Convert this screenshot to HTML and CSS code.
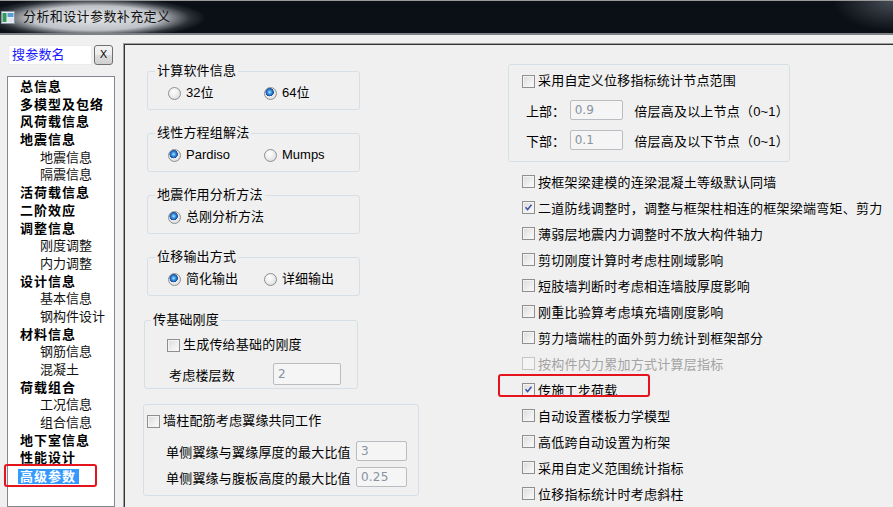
FILE: index.html
```html
<!DOCTYPE html>
<html lang="zh-CN">
<head>
<meta charset="utf-8">
<title>分析和设计参数补充定义</title>
<link rel="stylesheet" href="styles.css">
</head>
<body>
<div class="window">
  <header class="titlebar">
    <span class="app-icon">
      <svg width="14" height="13" viewBox="0 0 14 13">
        <rect x="0.5" y="0.5" width="13" height="12" fill="#e9eef2" stroke="#8a96a0"/>
        <rect x="1.5" y="2" width="4" height="9" fill="#2f9a5c"/>
        <rect x="6.5" y="2" width="6" height="4" fill="#5b9bd5"/>
        <rect x="6.5" y="7" width="6" height="4" fill="#d9e4ec"/>
      </svg>
    </span>
    <span class="title">分析和设计参数补充定义</span>
  </header>
  <div class="content">
    <aside class="side">
      <div class="search">
        <div class="search-box">搜参数名</div>
        <div class="xbtn">X</div>
      </div>
      <ul class="tree">
        <li class="top">总信息</li>
        <li class="top">多模型及包络</li>
        <li class="top">风荷载信息</li>
        <li class="top">地震信息</li>
        <li class="sub">地震信息</li>
        <li class="sub">隔震信息</li>
        <li class="top">活荷载信息</li>
        <li class="top">二阶效应</li>
        <li class="top">调整信息</li>
        <li class="sub">刚度调整</li>
        <li class="sub">内力调整</li>
        <li class="top">设计信息</li>
        <li class="sub">基本信息</li>
        <li class="sub">钢构件设计</li>
        <li class="top">材料信息</li>
        <li class="sub">钢筋信息</li>
        <li class="sub">混凝土</li>
        <li class="top">荷载组合</li>
        <li class="sub">工况信息</li>
        <li class="sub">组合信息</li>
        <li class="top">地下室信息</li>
        <li class="top">性能设计</li>
        <li class="top marked"><span class="sel">高级参数</span></li>
      </ul>
    </aside>
    <main class="panel">
      <section class="col-mid">
        <fieldset class="grp">
          <legend>计算软件信息</legend>
          <div class="opts">
            <span class="radio"><i></i>32位</span>
            <span class="radio on"><i></i>64位</span>
          </div>
        </fieldset>
        <fieldset class="grp">
          <legend>线性方程组解法</legend>
          <div class="opts">
            <span class="radio on"><i></i>Pardiso</span>
            <span class="radio"><i></i>Mumps</span>
          </div>
        </fieldset>
        <fieldset class="grp">
          <legend>地震作用分析方法</legend>
          <div class="opts">
            <span class="radio on"><i></i>总刚分析方法</span>
          </div>
        </fieldset>
        <fieldset class="grp">
          <legend>位移输出方式</legend>
          <div class="opts">
            <span class="radio on"><i></i>简化输出</span>
            <span class="radio"><i></i>详细输出</span>
          </div>
        </fieldset>
        <fieldset class="grp grp-base">
          <legend>传基础刚度</legend>
          <div class="chk-row"><span class="chk"></span>生成传给基础的刚度</div>
          <div class="field-row">
            <span class="flabel">考虑楼层数</span>
            <span class="field f-floors">2</span>
          </div>
        </fieldset>
        <div class="box box-wall">
          <div class="chk-row"><span class="chk"></span>墙柱配筋考虑翼缘共同工作</div>
          <div class="ratio-row r1">
            <span>单侧翼缘与翼缘厚度的最大比值</span>
            <span class="field">3</span>
          </div>
          <div class="ratio-row r2">
            <span>单侧翼缘与腹板高度的最大比值</span>
            <span class="field">0.25</span>
          </div>
        </div>
      </section>
      <section class="col-right">
        <div class="box box-range">
          <div class="chk-row"><span class="chk"></span>采用自定义位移指标统计节点范围</div>
          <div class="range-row rr1">
            <span class="rlabel">上部：</span>
            <span class="field f-range">0.9</span>
            <span class="rtext">倍层高及以上节点（0~1）</span>
          </div>
          <div class="range-row rr2">
            <span class="rlabel">下部：</span>
            <span class="field f-range">0.1</span>
            <span class="rtext">倍层高及以下节点（0~1）</span>
          </div>
        </div>
        <ul class="checks">
          <li><span class="chk"></span>按框架梁建模的连梁混凝土等级默认同墙</li>
          <li><span class="chk on"><svg viewBox="0 0 13 13"><path d="M3 6.3 L5.4 9 L10 3.2" /></svg></span>二道防线调整时，调整与框架柱相连的框架梁端弯矩、剪力</li>
          <li><span class="chk"></span>薄弱层地震内力调整时不放大构件轴力</li>
          <li><span class="chk"></span>剪切刚度计算时考虑柱刚域影响</li>
          <li><span class="chk"></span>短肢墙判断时考虑相连墙肢厚度影响</li>
          <li><span class="chk"></span>刚重比验算考虑填充墙刚度影响</li>
          <li><span class="chk"></span>剪力墙端柱的面外剪力统计到框架部分</li>
          <li class="disabled"><span class="chk"></span>按构件内力累加方式计算层指标</li>
          <li class="marked"><span class="chk on"><svg viewBox="0 0 13 13"><path d="M3 6.3 L5.4 9 L10 3.2" /></svg></span>传施工步荷载</li>
          <li><span class="chk"></span>自动设置楼板力学模型</li>
          <li><span class="chk"></span>高低跨自动设置为桁架</li>
          <li><span class="chk"></span>采用自定义范围统计指标</li>
          <li><span class="chk"></span>位移指标统计时考虑斜柱</li>
        </ul>
      </section>
    </main>
  </div>
</div>
</body>
</html>
```

FILE: styles.css
```css
html, body {
  margin: 0;
  padding: 0;
}
body {
  width: 893px;
  height: 507px;
  overflow: hidden;
  background: #f0f0f0;
  font-family: "Liberation Sans", "Noto Sans CJK SC", sans-serif;
  font-size: 13px;
  color: #000;
}
.window {
  width: 893px;
  height: 507px;
  display: flex;
  flex-direction: column;
}

/* ---------- title bar ---------- */
.titlebar {
  height: 32px;
  flex: none;
  display: flex;
  align-items: center;
  border-top: 1px solid #9a9a9a;
  border-bottom: 2px solid #7d8186;
  background:
    radial-gradient(ellipse 112px 21px at 94px 17px, rgba(236,238,240,0.97) 0%, rgba(216,220,224,0.88) 58%, rgba(120,126,132,0.3) 86%, rgba(11,15,22,0) 100%),
    radial-gradient(ellipse 60px 30px at 893px 0px, rgba(120,128,136,0.55), rgba(11,15,22,0) 100%),
    #0b0f16;
}
.app-icon {
  width: 14px;
  height: 13px;
  margin-left: 1px;
  display: flex;
}
.title {
  margin-left: 8px;
  font-size: 13px;
  letter-spacing: 0.4px;
  color: #111;
  line-height: 16px;
}

/* ---------- content ---------- */
.content {
  flex: 1;
  display: flex;
  padding-top: 8px;
  background: #f0f0f0;
  min-height: 0;
}
.side {
  width: 123px;
  flex: none;
  display: flex;
  flex-direction: column;
}
.search {
  display: flex;
  align-items: center;
  margin-top: 2px;
  padding-left: 8px;
  gap: 2px;
}
.search-box {
  width: 84px;
  height: 20px;
  box-sizing: border-box;
  background: #fff;
  border: 1px solid #ececec;
  color: #1a1aff;
  font-size: 13px;
  line-height: 18px;
  padding-left: 3px;
  letter-spacing: 0.2px;
}
.xbtn {
  width: 19px;
  height: 20px;
  box-sizing: border-box;
  border: 1px solid #707070;
  border-radius: 3px;
  background: linear-gradient(#f4f4f4, #ebebeb 48%, #dcdcdc 52%, #cfcfcf);
  font-family: "DejaVu Sans", sans-serif;
  font-size: 11px;
  line-height: 18px;
  text-align: center;
  color: #111;
}
.tree {
  list-style: none;
  margin: 11px 0 0 7px;
  padding: 1px 0 0;
  width: 108px;
  height: 440px;
  box-sizing: border-box;
  background: #fff;
  border: 1px solid #828790;
}
.tree li {
  line-height: 17.7px;
  height: 17.7px;
  white-space: nowrap;
  font-size: 13px;
}
.tree .top {
  padding-left: 12px;
  font-weight: bold;
  letter-spacing: 1px;
}
.tree .sub {
  padding-left: 32px;
  color: #111;
}
.tree .sel {
  display: inline-block;
  background: #3399ff;
  color: #fff;
  line-height: 15px;
  padding: 0 3px 0 2px;
  margin-left: -2px;
  vertical-align: middle;
}
.tree .marked {
  position: relative;
}
.tree .marked::after {
  content: "";
  position: absolute;
  left: -4px;
  top: -3px;
  width: 93px;
  height: 23px;
  box-sizing: border-box;
  border: 2px solid #e5141c;
  border-radius: 3px;
}

/* ---------- panel ---------- */
.panel {
  flex: 1;
  display: flex;
  border-top: 1px solid #a0a0a0;
  border-left: 1px solid #a0a0a0;
  box-shadow: inset 1px 1px 0 #333;
  padding: 1px 0 0 1px;
  min-width: 0;
}
.col-mid {
  width: 383px;
  flex: none;
  box-sizing: border-box;
  padding-left: 22px;
  display: flex;
  flex-direction: column;
}
.col-right {
  flex: 1;
  display: flex;
  flex-direction: column;
}

/* group boxes */
.grp {
  margin: 15px 0 0;
  padding: 5px 0 7px;
  width: 213px;
  box-sizing: border-box;
  border: 1px solid #d5dfe5;
  border-radius: 3px;
  min-width: 0;
}
.grp:first-child {
  margin-top: 18px;
}
.grp legend {
  margin-left: 7px;
  padding: 0 2px;
  line-height: 16px;
  font-size: 13px;
  letter-spacing: 0.2px;
}
.opts {
  display: grid;
  grid-template-columns: 96px auto;
  padding-left: 20px;
  height: 18px;
  align-items: center;
}
.radio {
  display: inline-flex;
  align-items: center;
  gap: 5px;
  line-height: 18px;
  white-space: nowrap;
}
.radio i {
  width: 13px;
  height: 13px;
  box-sizing: border-box;
  border-radius: 50%;
  border: 1px solid #8e8f8f;
  background: radial-gradient(circle at 40% 35%, #ffffff 0%, #ececec 50%, #cfd1d3 100%);
  flex: none;
}
.radio.on i {
  background:
    radial-gradient(circle at 42% 38%, #b7e4ff 0px, #4aa3ea 1.6px, #1b5fb4 3.4px, #1d4e96 4px, rgba(0,0,0,0) 4.4px),
    radial-gradient(circle at 40% 35%, #ffffff 0%, #ececec 50%, #cfd1d3 100%);
}

/* checkbox */
.chk {
  width: 13px;
  height: 13px;
  box-sizing: border-box;
  border: 1px solid #8e8f8f;
  background: linear-gradient(135deg, #d9dadb 0%, #eeeeee 55%, #fbfbfb 100%);
  box-shadow: inset 0 0 0 1px #f4f4f4;
  flex: none;
  display: inline-flex;
}
.chk svg {
  width: 11px;
  height: 11px;
}
.chk svg path {
  fill: none;
  stroke: #3b4ea6;
  stroke-width: 1.8;
}
.chk-row {
  display: flex;
  align-items: center;
  gap: 3px;
  height: 16px;
  line-height: 16px;
  white-space: nowrap;
  letter-spacing: 0.2px;
}

/* fields */
.field {
  display: inline-block;
  height: 20px;
  box-sizing: border-box;
  border: 1px solid #b9bdc1;
  border-radius: 2px;
  background: #f5f5f5;
  color: #8793a0;
  font-size: 12px;
  line-height: 18px;
  padding-left: 4px;
  font-family: "DejaVu Sans", "Liberation Sans", sans-serif;
}

/* base stiffness group */
.grp-base {
  margin-top: 16px;
  width: 214px;
  margin-left: -3px;
  padding: 9px 0 3px;
}
.grp-base legend {
  margin-left: 6px;
}
.grp-base .chk-row {
  padding-left: 22px;
}
.field-row {
  display: flex;
  align-items: center;
  margin-top: 10px;
  padding-left: 24px;
  height: 22px;
}
.flabel {
  width: 104px;
  letter-spacing: 0.2px;
}
.f-floors {
  width: 68px;
  height: 22px;
  line-height: 20px;
}

/* plain boxes */
.box {
  border: 1px solid #d5dfe5;
  border-radius: 3px;
  box-sizing: border-box;
}
.box-wall {
  margin: 15px 0 0 -4px;
  width: 276px;
  padding: 8px 0 8px 3px;
}
.ratio-row {
  display: grid;
  grid-template-columns: 190px 51px;
  align-items: center;
  padding-left: 19px;
  height: 20px;
  white-space: nowrap;
  letter-spacing: 0.2px;
}
.ratio-row .field {
  width: 51px;
}
.ratio-row.r1 { margin-top: 12px; }
.ratio-row.r2 { margin-top: 6px; }

/* right column */
.box-range {
  margin-top: 19px;
  width: 282px;
  padding: 8px 0 11px 13px;
}
.range-row {
  display: flex;
  align-items: center;
  height: 20px;
  padding-left: 4px;
  white-space: nowrap;
}
.range-row.rr1 { margin-top: 11px; }
.range-row.rr2 { margin-top: 10px; }
.rlabel {
  width: 45px;
}
.f-range {
  width: 55px;
}
.rtext {
  margin-left: 11px;
  letter-spacing: 0.2px;
}
.checks {
  list-style: none;
  margin: 6px 0 0;
  padding: 0 0 0 14px;
}
.checks li {
  height: 26px;
  display: flex;
  align-items: center;
  gap: 3px;
  white-space: nowrap;
  letter-spacing: 0.25px;
}
.checks li.disabled {
  color: #a3a3a3;
}
.checks li.disabled .chk {
  border-color: #c5c5c5;
  background: #f4f4f4;
}
.checks li.marked {
  position: relative;
}
.checks li.marked::after {
  content: "";
  position: absolute;
  left: -24px;
  top: -2px;
  width: 152px;
  height: 23px;
  box-sizing: border-box;
  border: 2px solid #e5141c;
  border-radius: 3px;
}
```
